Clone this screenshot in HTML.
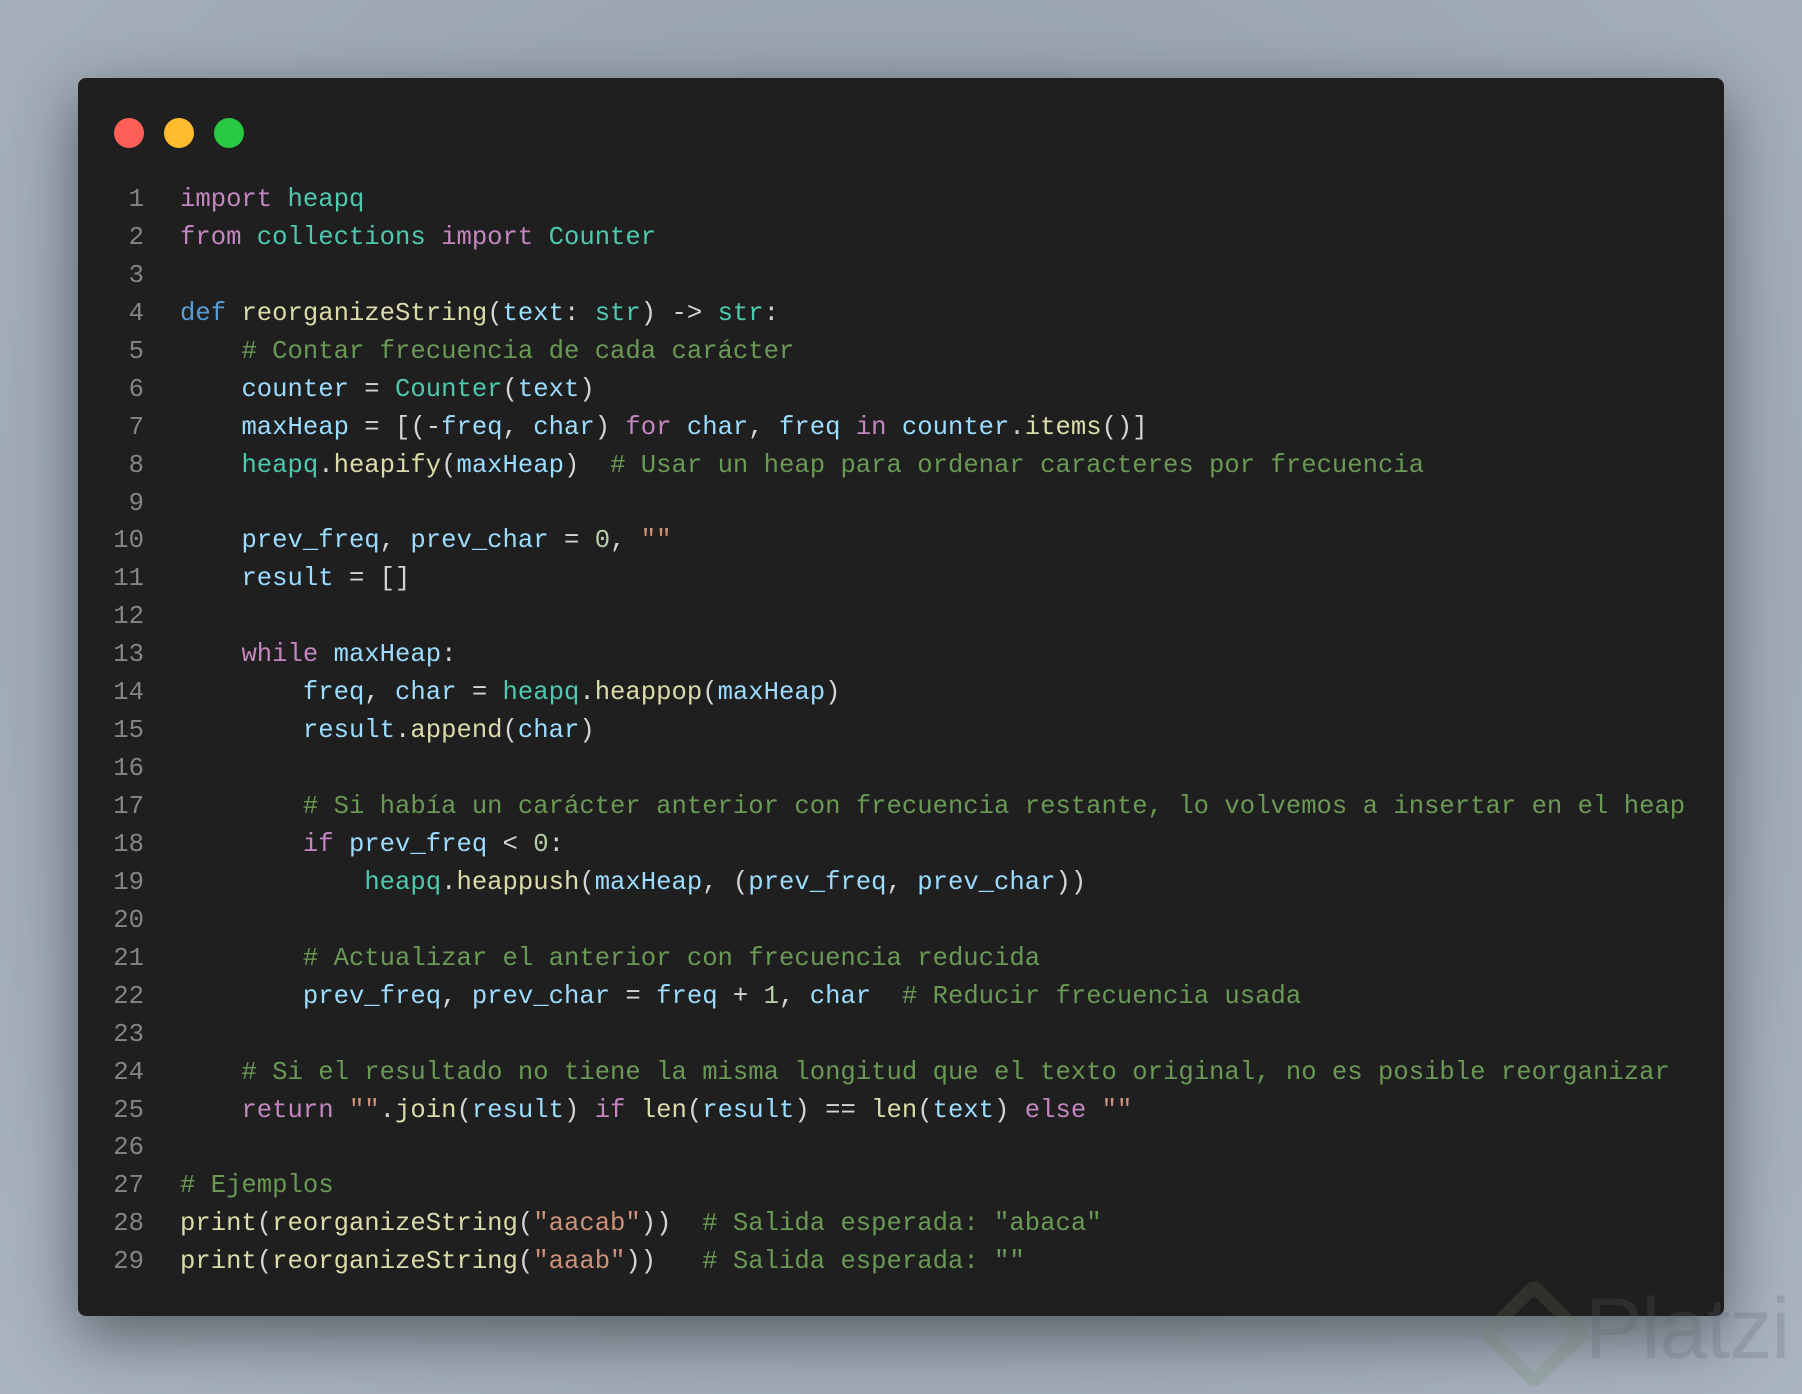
<!DOCTYPE html>
<html><head><meta charset="utf-8"><style>
html,body{margin:0;padding:0}
body{width:1802px;height:1394px;overflow:hidden;position:relative;background:radial-gradient(ellipse at 50% 40%,#8f9aa6 0%,#a0abb7 70%,#a9b4c0 100%);font-family:"Liberation Mono",monospace}
.win{position:absolute;left:78px;top:78px;width:1646px;height:1238px;background:#1f1f1f;border-radius:8px;box-shadow:0 20px 60px rgba(0,0,0,.45)}
.dot{position:absolute;top:118px;width:30px;height:30px;border-radius:50%}
pre{position:absolute;margin:0;top:181px;font-family:"Liberation Mono",monospace;font-size:25.6px;line-height:37.93px;color:#d4d4d4}
.ln{left:100px;width:44px;text-align:right;color:#858585}
.code{left:180px}
.k{color:#c586c0}.t{color:#4ec9b0}.d{color:#569cd6}.f{color:#dcdcaa}.v{color:#9cdcfe}.c{color:#6a9955}.s{color:#ce9178}.n{color:#b5cea8}
.wm{position:absolute;left:1585px;top:1280px;font-family:"Liberation Sans",sans-serif;font-size:86px;color:rgba(90,100,110,.22);letter-spacing:-1px}
.wmi{position:absolute;left:1494px;top:1294px;width:54px;height:54px;border:13px solid rgba(110,130,90,.2);transform:rotate(45deg);border-radius:10px}
</style></head><body>
<div class="win"></div>
<div class="dot" style="left:114px;background:#fe5f57"></div>
<div class="dot" style="left:164px;background:#febc2e"></div>
<div class="dot" style="left:214px;background:#28c840"></div>
<pre class="ln">1
2
3
4
5
6
7
8
9
10
11
12
13
14
15
16
17
18
19
20
21
22
23
24
25
26
27
28
29</pre>
<pre class="code"><span class="k">import</span> <span class="t">heapq</span>
<span class="k">from</span> <span class="t">collections</span> <span class="k">import</span> <span class="t">Counter</span>

<span class="d">def</span> <span class="f">reorganizeString</span>(<span class="v">text</span>: <span class="t">str</span>) -&gt; <span class="t">str</span>:
    <span class="c"># Contar frecuencia de cada carácter</span>
    <span class="v">counter</span> = <span class="t">Counter</span>(<span class="v">text</span>)
    <span class="v">maxHeap</span> = [(-<span class="v">freq</span>, <span class="v">char</span>) <span class="k">for</span> <span class="v">char</span>, <span class="v">freq</span> <span class="k">in</span> <span class="v">counter</span>.<span class="f">items</span>()]
    <span class="t">heapq</span>.<span class="f">heapify</span>(<span class="v">maxHeap</span>)  <span class="c"># Usar un heap para ordenar caracteres por frecuencia</span>

    <span class="v">prev_freq</span>, <span class="v">prev_char</span> = <span class="n">0</span>, <span class="s">""</span>
    <span class="v">result</span> = []

    <span class="k">while</span> <span class="v">maxHeap</span>:
        <span class="v">freq</span>, <span class="v">char</span> = <span class="t">heapq</span>.<span class="f">heappop</span>(<span class="v">maxHeap</span>)
        <span class="v">result</span>.<span class="f">append</span>(<span class="v">char</span>)

        <span class="c"># Si había un carácter anterior con frecuencia restante, lo volvemos a insertar en el heap</span>
        <span class="k">if</span> <span class="v">prev_freq</span> &lt; <span class="n">0</span>:
            <span class="t">heapq</span>.<span class="f">heappush</span>(<span class="v">maxHeap</span>, (<span class="v">prev_freq</span>, <span class="v">prev_char</span>))

        <span class="c"># Actualizar el anterior con frecuencia reducida</span>
        <span class="v">prev_freq</span>, <span class="v">prev_char</span> = <span class="v">freq</span> + <span class="n">1</span>, <span class="v">char</span>  <span class="c"># Reducir frecuencia usada</span>

    <span class="c"># Si el resultado no tiene la misma longitud que el texto original, no es posible reorganizar</span>
    <span class="k">return</span> <span class="s">""</span>.<span class="f">join</span>(<span class="v">result</span>) <span class="k">if</span> <span class="f">len</span>(<span class="v">result</span>) == <span class="f">len</span>(<span class="v">text</span>) <span class="k">else</span> <span class="s">""</span>

<span class="c"># Ejemplos</span>
<span class="f">print</span>(<span class="f">reorganizeString</span>(<span class="s">"aacab"</span>))  <span class="c"># Salida esperada: "abaca"</span>
<span class="f">print</span>(<span class="f">reorganizeString</span>(<span class="s">"aaab"</span>))   <span class="c"># Salida esperada: ""</span></pre>
<div class="wmi"></div>
<div class="wm">Platzi</div>
</body></html>
